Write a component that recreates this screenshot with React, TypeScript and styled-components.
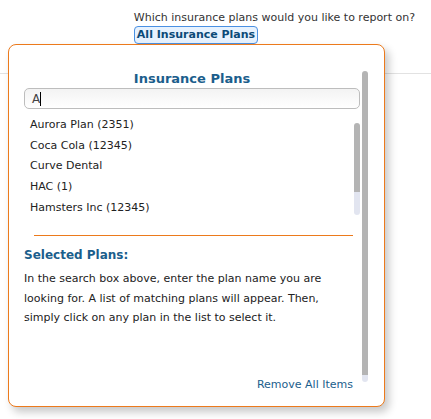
import React from "react";
import styled, { createGlobalStyle } from "styled-components";

const GlobalStyle = createGlobalStyle`
  body {
    margin: 0;
    background: #ffffff;
    font-family: "DejaVu Sans", Verdana, sans-serif;
    font-size: 11px;
    color: #222222;
  }
`;

const StyledPage = styled.div`
  position: relative;
  width: 431px;
  height: 419px;
  overflow: hidden;
`;

const StyledHeader = styled.div`
  height: 62px;
  padding: 11px 16px 0 0;
  border-bottom: 1px solid #e2e2e2;
  display: flex;
  justify-content: flex-end;
`;

const StyledQuestion = styled.div`
  display: flex;
  flex-direction: column;
  align-items: flex-start;
  color: #333333;
  line-height: 14px;
`;

const StyledPlansLink = styled.span`
  margin-top: 1px;
  padding: 1px 2px;
  border: 1px solid #4a90e2;
  border-radius: 4px;
  background: #e7f2fe;
  color: #0c4a78;
  font-weight: bold;
`;

const StyledPopup = styled.div`
  position: absolute;
  left: 8px;
  top: 44px;
  width: 377px;
  height: 363px;
  box-sizing: border-box;
  padding: 26px 16px 0 15px;
  border: 1px solid #ec7a1c;
  border-radius: 8px;
  background: #ffffff;
  box-shadow: 4px 5px 8px rgba(0, 0, 0, 0.22);
`;

const StyledFrame = styled.div`
  display: flex;
  align-items: flex-start;
`;

const StyledContent = styled.div`
  flex: 1;
  height: 322px;
  display: flex;
  flex-direction: column;
  overflow: hidden;
`;

const StyledTitle = styled.div`
  margin-top: 1px;
  text-align: center;
  font-size: 13px;
  font-weight: bold;
  line-height: 14px;
  color: #1b5e8c;
`;

const StyledSearch = styled.div`
  margin-top: 2px;
  height: 19px;
  padding: 0 6px 0 7px;
  display: flex;
  align-items: center;
  border: 1px solid #bdbdbd;
  border-radius: 5px;
  background: linear-gradient(#f3f3f3, #ffffff);
  color: #444444;
  font-size: 12px;
`;

const StyledCaret = styled.span`
  width: 1px;
  height: 14px;
  background: #000000;
`;

const StyledList = styled.div`
  margin-top: 6px;
  display: flex;
  height: 101px;
`;

const StyledItems = styled.div`
  flex: 1;
  padding-left: 6px;
`;

const StyledItem = styled.div`
  line-height: 20.7px;
  color: #222222;
`;

const StyledScrollbar = styled.div<{ $height: number; $thumb: number; $top?: number }>`
  width: 6px;
  height: ${(p) => p.$height}px;
  margin-top: ${(p) => p.$top ?? 0}px;
  border-radius: 3px;
  background: linear-gradient(
    #b4b4b4 0,
    #b4b4b4 ${(p) => p.$thumb}px,
    #e2e5f0 ${(p) => p.$thumb}px
  );
`;

const StyledRule = styled.hr`
  margin: 19px 7px 0 10px;
  border: 0;
  border-top: 1px solid #ec7a1c;
`;

const StyledSubtitle = styled.div`
  margin-top: 12px;
  font-size: 12px;
  font-weight: bold;
  line-height: 14px;
  color: #1b5e8c;
`;

const StyledHint = styled.p`
  margin: 7px 24px 0 0;
  line-height: 19.5px;
  color: #222222;
`;

const StyledRemove = styled.a`
  margin: auto 7px 1px 0;
  align-self: flex-end;
  line-height: 14px;
  color: #1b5e8c;
`;

const plans = [
  "Aurora Plan (2351)",
  "Coca Cola (12345)",
  "Curve Dental",
  "HAC (1)",
  "Hamsters Inc (12345)",
];

const App = () => {
  return (
    <StyledPage>
      <GlobalStyle />
      <StyledHeader>
        <StyledQuestion>
          Which insurance plans would you like to report on?
          <StyledPlansLink>All Insurance Plans</StyledPlansLink>
        </StyledQuestion>
      </StyledHeader>
      <StyledPopup>
        <StyledFrame>
          <StyledContent>
            <StyledTitle>Insurance Plans</StyledTitle>
            <StyledSearch>
              A
              <StyledCaret />
            </StyledSearch>
            <StyledList>
              <StyledItems>
                {plans.map((plan) => (
                  <StyledItem key={plan}>{plan}</StyledItem>
                ))}
              </StyledItems>
              <StyledScrollbar $height={92} $thumb={69} $top={8} />
            </StyledList>
            <StyledRule />
            <StyledSubtitle>Selected Plans:</StyledSubtitle>
            <StyledHint>
              In the search box above, enter the plan name you are looking for.
              A list of matching plans will appear. Then, simply click on any
              plan in the list to select it.
            </StyledHint>
            <StyledRemove>Remove All Items</StyledRemove>
          </StyledContent>
          <StyledScrollbar $height={311} $thumb={304} style={{ marginLeft: 2 }} />
        </StyledFrame>
      </StyledPopup>
    </StyledPage>
  );
};

export default App;
